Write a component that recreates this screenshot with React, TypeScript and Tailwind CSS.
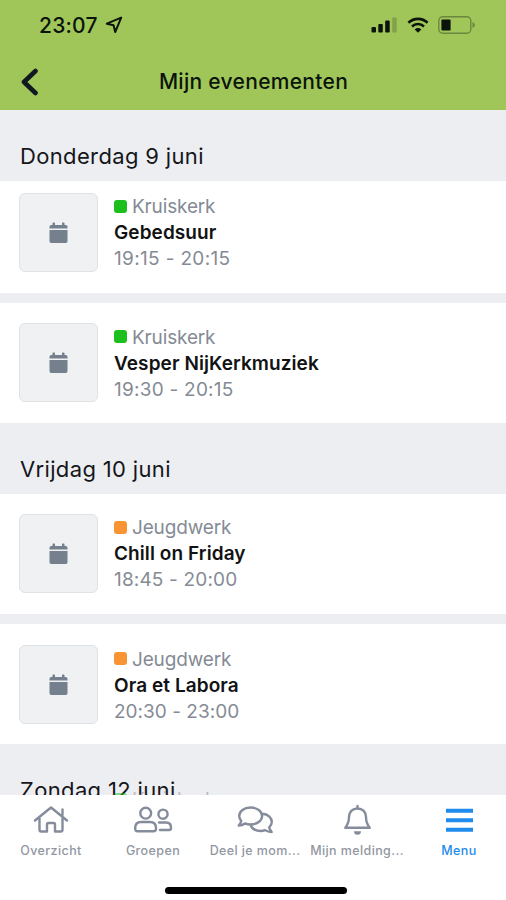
import type { ReactNode } from "react";

interface EventItem {
  category: string;
  color: string;
  title: string;
  time: string;
  timeTracking: string;
  spacing: string;
}

interface Day {
  label: string;
  events: EventItem[];
}

const GREEN = "bg-[#1dbf1d]";
const ORANGE = "bg-[#f99435]";

const DAYS: Day[] = [
  {
    label: "Donderdag 9 juni",
    events: [
      { category: "Kruiskerk", color: GREEN, title: "Gebedsuur", time: "19:15 - 20:15", timeTracking: "tracking-[0.34px]", spacing: "h-[112px] pt-[12px]" },
      { category: "Kruiskerk", color: GREEN, title: "Vesper NijKerkmuziek", time: "19:30 - 20:15", timeTracking: "tracking-[0.24px]", spacing: "h-[120px] pt-[20px]" },
    ],
  },
  {
    label: "Vrijdag 10 juni",
    events: [
      { category: "Jeugdwerk", color: ORANGE, title: "Chill on Friday", time: "18:45 - 20:00", timeTracking: "tracking-[0.16px]", spacing: "h-[120px] pt-[20px]" },
      { category: "Jeugdwerk", color: ORANGE, title: "Ora et Labora", time: "20:30 - 23:00", timeTracking: "tracking-[0.02px]", spacing: "h-[120px] pt-[21px]" },
    ],
  },
];

const StatusBar = () => (
  <div className="flex h-[50px] items-center justify-between pl-[39px] pr-[30px]">
    <div className="flex items-center gap-[7px]">
      <span className="text-[21px] font-medium leading-none tracking-[0.2px]">23:07</span>
      <svg width="18" height="18" viewBox="0 0 18 18" fill="none" stroke="currentColor" strokeWidth="2" strokeLinejoin="round">
        <path d="M16.2 1.6 1.8 7.7 8.6 9.3 10.2 16.1Z" />
      </svg>
    </div>
    <div className="flex items-center gap-[9px]">
      <svg width="27" height="16" viewBox="0 0 27 16" fill="currentColor">
        <rect x="0.5" y="10" width="4.5" height="5.5" rx="1" />
        <rect x="7.3" y="7" width="4.5" height="8.5" rx="1" />
        <rect x="14.2" y="3.5" width="4.5" height="12" rx="1" />
        <rect x="21.2" y="0.5" width="4.5" height="15" rx="1" opacity="0.2" />
      </svg>
      <svg width="22" height="16" viewBox="0 0 22 16" fill="none" stroke="currentColor" strokeWidth="2.6">
        <path d="M1.4 5.8a13.8 13.8 0 0 1 19.2 0" />
        <path d="M5 9.5a8.6 8.6 0 0 1 12 0" />
        <path d="M11 15.7 7.7 12.4a4.7 4.7 0 0 1 6.6 0Z" fill="currentColor" stroke="none" />
      </svg>
      <svg width="38" height="18" viewBox="0 0 38 18">
        <rect x="0.8" y="0.8" width="32" height="16.4" rx="4" fill="none" stroke="currentColor" strokeWidth="1.4" opacity="0.35" />
        <rect x="3.4" y="3.4" width="9.2" height="11" rx="1" fill="currentColor" />
        <path d="M34.5 6v6c1.6-.8 2.4-1.8 2.4-3s-.8-2.2-2.4-3Z" fill="currentColor" opacity="0.35" />
      </svg>
    </div>
  </div>
);

const Header = () => (
  <header className="h-[110px] shrink-0 bg-[#a0c65a] text-[#0b140c]">
    <StatusBar />
    <div className="grid h-[63px] grid-cols-[60px_1fr_60px] items-center">
      <button aria-label="Terug" className="pl-[20px]">
        <svg width="20" height="28" viewBox="0 0 20 28" fill="none" stroke="#101820" strokeWidth="4.6" strokeLinecap="round" strokeLinejoin="round">
          <path d="M15.5 3 4 14 15.5 25" />
        </svg>
      </button>
      <h1 className="whitespace-nowrap pl-[1px] text-center text-[21px] font-medium leading-none tracking-[0.3px]">Mijn evenementen</h1>
    </div>
  </header>
);

const DayHeading = ({ label }: { label: string }) => (
  <h2 className="h-[70.5px] shrink-0 whitespace-nowrap bg-[#edeef2] pl-[20px] pt-[32px] text-[22px] leading-[29px] tracking-[0.35px] text-[#15161a]">
    {label}
  </h2>
);

const Category = ({ color, label }: { color: string; label: string }) => (
  <div className="flex items-center gap-[5px] tracking-[-0.15px]">
    <span className={`mb-[2px] size-[13px] rounded-[3px] ${color}`} />
    <span>{label}</span>
  </div>
);

const EventRow = ({ event }: { event: EventItem }) => (
  <li className={`flex gap-[16px] bg-white pl-[19px] ${event.spacing}`}>
    <div className="flex size-[79px] shrink-0 items-center justify-center rounded-[6px] border border-[#dfe3e6] bg-[#eff1f3] pt-[1px]">
      <svg width="19" height="22" viewBox="0 0 19 22" fill="#74808e">
        <path d="M0.5 6.5V4.7A1.7 1.7 0 0 1 2.2 3H3.5V1.2Q3.5.5 4.2.5H5.3Q6 .5 6 1.2V3h7V1.2q0-.7.7-.7h1.1q.7 0 .7.7V3h1.3a1.7 1.7 0 0 1 1.7 1.7v1.8Z" />
        <path d="M.5 8h18v11.3a1.7 1.7 0 0 1-1.7 1.7H2.2a1.7 1.7 0 0 1-1.7-1.7Z" />
      </svg>
    </div>
    <div className="mt-[1.5px] flex flex-col whitespace-nowrap text-[19px] leading-[26px] text-[#858b95]">
      <Category color={event.color} label={event.category} />
      <span className="font-semibold tracking-[0.08px] text-[#111214]">{event.title}</span>
      <span className={event.timeTracking}>{event.time}</span>
    </div>
  </li>
);

const Tab = ({ label, active, children }: { label: string; active?: boolean; children: ReactNode }) => (
  <button className={`flex w-[102px] shrink-0 flex-col items-center ${active ? "text-[#1f8bec]" : "text-[#858c9b]"}`}>
    <svg width="40" height="32" viewBox="0 0 40 32" fill="none" stroke="currentColor" strokeWidth="2.4" strokeLinecap="round" strokeLinejoin="round">
      {children}
    </svg>
    <span className={`mt-[7px] whitespace-nowrap text-[12.5px] font-medium leading-[16px] tracking-[0.4px] ${active ? "" : "text-[#9297a1]"}`}>{label}</span>
  </button>
);

const TabBar = () => (
  <nav className="h-[105px] shrink-0 bg-white">
    <div className="flex pt-[9px]">
      <Tab label="Overzicht">
        <path d="M4 16.5 20 3.5 36 16.5M8.5 14v11.8q0 1.700 1.700 1.700h5.800v-7q0-1.500 1.500-1.500h5q1.500 0 1.500 1.500v7h5.800q1.700 0 1.700-1.700V14M31.500 11V5.500" />
      </Tab>
      <Tab label="Groepen">
        <circle cx="12.7" cy="9.2" r="5.4" />
        <circle cx="30" cy="10.2" r="4.6" />
        <path d="M8 18h9q6 0 6 6v.8q0 2.500-2.500 2.500H4.700q-2.500 0-2.500-2.500V24q0-6 5.800-6ZM26 18.500h7q5 0 5 5v.5q0 2-2 2h-9" />
      </Tab>
      <Tab label="Deel je mom...">
        <path d="M15.500 3.500c6.500 0 11.600 3.700 11.600 8.500s-5.100 8.500-11.600 8.500c-2 0-3.800-.4-5.500-1-1.800 1.300-3.800 2-6.300 2 1.300-1.300 2.200-3 2.600-4.700-1.400-1.400-2.100-3-2.100-4.800 0-4.800 4.800-8.500 11.300-8.500ZM15.500 21c1.500 3.600 5.500 6 10 6 1.700 0 3.200-.3 4.600-.9 1.800 1.300 3.800 1.900 6.600 1.900-1.200-1.200-2.100-3.100-2.500-4.600 1.700-1.500 2.600-3.300 2.600-5.300 0-4.500-4-8-9.500-8.300" />
      </Tab>
      <Tab label="Mijn melding...">
        <g transform="translate(0.5 0)">
          <path d="M20 2v2M20 4.500c-5.200 0-8.500 3.600-8.500 8.500 0 6-1.800 8.300-3.700 10.700h24.400c-1.900-2.400-3.700-4.700-3.700-10.700 0-4.900-3.300-8.500-8.500-8.500Z" />
          <path d="M16.500 27.200h7a3.500 3.500 0 0 1-7 0Z" fill="currentColor" stroke="none" />
        </g>
      </Tab>
      <Tab label="Menu" active>
        <path strokeWidth="4" strokeLinecap="butt" d="M7 6.800h27M7 16.200h27M7 25.800h27" />
      </Tab>
    </div>
    <div className="ml-[165px] mt-[28px] h-[7px] w-[182px] rounded-full bg-black" />
  </nav>
);

export default function App() {
  return (
    <div className="flex h-[900px] w-[506px] flex-col overflow-hidden bg-[#edeef2] font-['Inter','Liberation_Sans',sans-serif]">
      <Header />
      <main className="relative h-[685px] shrink-0 overflow-hidden">
        {DAYS.map((day) => (
          <section key={day.label}>
            <DayHeading label={day.label} />
            <ul className="flex flex-col gap-[10.5px]">
              {day.events.map((event) => (
                <EventRow key={event.title} event={event} />
              ))}
            </ul>
          </section>
        ))}
        <DayHeading label="Zondag 12 juni" />
        {/* next row starting to slide in above the tab bar */}
        <div className="absolute left-[114px] top-[677px] text-[19px] leading-[26px] text-[#858b95] opacity-50">
          <Category color={GREEN} label="Kruiskerk" />
        </div>
      </main>
      <TabBar />
    </div>
  );
}
